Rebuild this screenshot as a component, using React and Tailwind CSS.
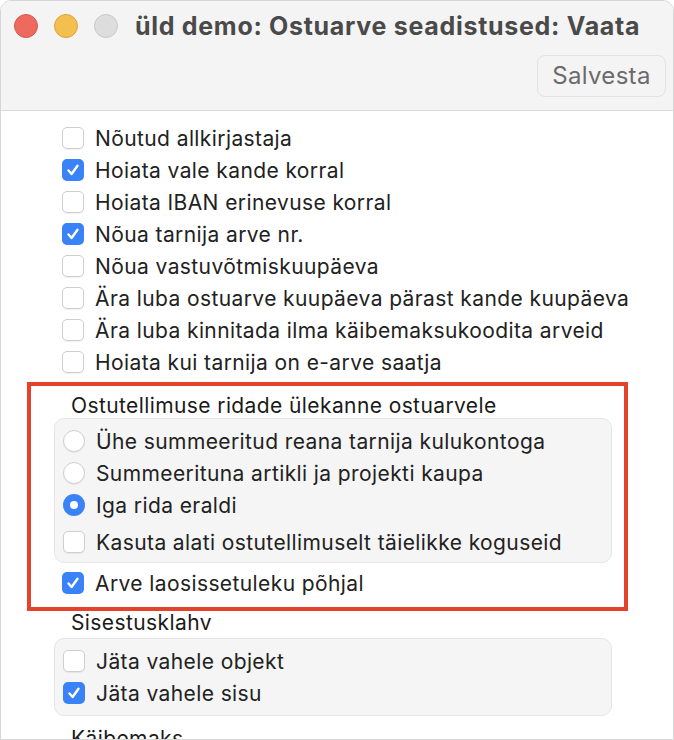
import React from "react";

const font = { fontFamily: "Inter, 'Noto Sans', sans-serif" };

function Check({ checked }) {
  if (checked) {
    return (
      <span className="flex h-[22px] w-[22px] shrink-0 items-center justify-center rounded-[5px] bg-[#3a82f7]">
        <svg width="14" height="14" viewBox="0 0 14 14" fill="none">
          <path d="M2.5 7.5 L5.6 11 L11.5 2.8" stroke="white" strokeWidth="2.4" strokeLinecap="round" strokeLinejoin="round" />
        </svg>
      </span>
    );
  }
  return <span className="h-[22px] w-[22px] shrink-0 rounded-[5px] border border-[#cfcfcf] bg-white shadow-[0_1px_1px_rgba(0,0,0,0.06)]" />;
}

function Radio({ checked }) {
  if (checked) {
    return (
      <span className="flex h-[22px] w-[22px] shrink-0 items-center justify-center rounded-full bg-[#3a82f7]">
        <span className="h-[8px] w-[8px] rounded-full bg-white" />
      </span>
    );
  }
  return <span className="h-[22px] w-[22px] shrink-0 rounded-full border border-[#cfcfcf] bg-white shadow-[0_1px_1px_rgba(0,0,0,0.06)]" />;
}

function Row({ label, checked, radio }) {
  return (
    <div className="flex h-[32px] items-center gap-[11px] whitespace-nowrap pl-[8px]">
      {radio ? <Radio checked={checked} /> : <Check checked={checked} />}
      <span className="whitespace-nowrap text-[21px] leading-none tracking-[0.4px] text-[#222222]">{label}</span>
    </div>
  );
}

function Header({ children }) {
  return <div className="flex h-[26px] items-center whitespace-nowrap pl-[17px] text-[21px] leading-none tracking-[0.4px] text-[#1a1a1a]">{children}</div>;
}

export default function App() {
  return (
    <div className="h-[740px] w-[674px] overflow-hidden bg-white" style={font}>
      <div className="h-full w-full overflow-hidden rounded-t-[11px] border border-[#d6d6d6] bg-white">
        <div className="h-[110px] border-b border-[#dadada] bg-[#f4f4f4]">
          <div className="flex h-[50px] items-center">
            <div className="ml-[13px] flex items-center gap-[16px]">
              <span className="h-[24px] w-[24px] rounded-full border border-[#d9574f] bg-[#ee6a5f]" />
              <span className="h-[24px] w-[24px] rounded-full border border-[#dba43d] bg-[#f5bf4f]" />
              <span className="h-[24px] w-[24px] rounded-full border border-[#c9c9c9] bg-[#dddddd]" />
            </div>
            <div className="ml-[17px] whitespace-nowrap text-[25px] font-bold leading-none tracking-[0.7px] text-[#4a4a4a]">üld demo: Ostuarve seadistused: Vaata</div>
          </div>
          <div className="flex justify-end pr-[7px] pt-[4px]">
            <div className="flex h-[42px] w-[129px] items-center justify-center rounded-[8px] border border-[#e2e2e2] bg-[#f4f4f4] text-[24px] leading-none tracking-[0.3px] text-[#6b6b6b]">
              Salvesta
            </div>
          </div>
        </div>

        <div className="ml-[53px] w-[558px] pt-[11px]">
          <Row label="Nõutud allkirjastaja" />
          <Row label="Hoiata vale kande korral" checked />
          <Row label="Hoiata IBAN erinevuse korral" />
          <Row label="Nõua tarnija arve nr." checked />
          <Row label="Nõua vastuvõtmiskuupäeva" />
          <Row label="Ära luba ostuarve kuupäeva pärast kande kuupäeva" />
          <Row label="Ära luba kinnitada ilma käibemaksukoodita arveid" />
          <Row label="Hoiata kui tarnija on e-arve saatja" />

          <div className="relative mt-[14px]">
            <div className="pointer-events-none absolute -left-[27px] -right-[16px] -top-[10px] -bottom-[12px] border-4 border-[#e5422b]" />
            <Header>Ostutellimuse ridade ülekanne ostuarvele</Header>
            <div className="rounded-[10px] border border-[#e6e6e6] bg-[#f5f5f5] pb-[4px] pt-[6px]">
              <Row radio label="Ühe summeeritud reana tarnija kulukontoga" />
              <Row radio label="Summeerituna artikli ja projekti kaupa" />
              <Row radio checked label="Iga rida eraldi" />
              <div className="mt-[5px]">
                <Row label="Kasuta alati ostutellimuselt täielikke koguseid" />
              </div>
            </div>
            <div className="mt-[4px]">
              <Row label="Arve laosissetuleku põhjal" checked />
            </div>
          </div>

          <div className="mt-[10px]">
            <Header>Sisestusklahv</Header>
          </div>
          <div className="mt-[3px] rounded-[10px] border border-[#e6e6e6] bg-[#f5f5f5] pb-[6px] pt-[6px]">
            <Row label="Jäta vahele objekt" />
            <Row label="Jäta vahele sisu" checked />
          </div>
          <div className="mt-[9px]">
            <Header>Käibemaks</Header>
          </div>
        </div>
      </div>
    </div>
  );
}
